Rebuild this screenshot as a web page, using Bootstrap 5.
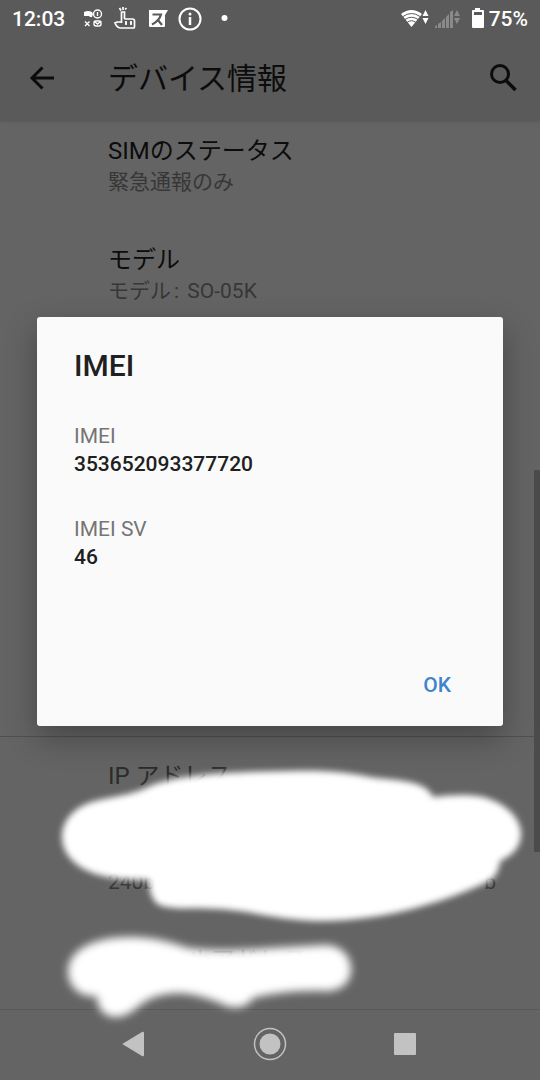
<!DOCTYPE html>
<html lang="ja">
<head>
<meta charset="utf-8">
<meta name="viewport" content="width=device-width, initial-scale=1">
<title>デバイス情報</title>
<link href="https://cdn.jsdelivr.net/npm/bootstrap@5.3.0/dist/css/bootstrap.min.css" rel="stylesheet">
<style>
  body { background: #646464; color: #0c0c0c; font-family: Roboto, "Noto Sans CJK JP", sans-serif; font-size: 21px; line-height: 25px; }
  svg { display: block; }
  .top-area { background: #5a5a5a; box-shadow: 0 1px 3px #5a5a5a; }
  .status-bar { height: 38px; padding: 0 12px; color: #fff; font-weight: 500; }
  .app-bar { height: 83px; padding: 0 20px 2px 28px; }
  .app-title { font-size: 30px; line-height: 40px; font-weight: 400; margin-left: 52px; }
  .info-list { padding: 13px 44px 0 108px; min-height: 615px; }
  .info-row { padding-bottom: 47px; }
  .info-row dt { font-size: 24px; line-height: 35px; font-weight: 400; }
  .info-row dd { margin: 0; color: #373737; line-height: 27px; }
  .colon { padding: 0 3px; }
  .address-list { padding: 22px 44px 0 108px; min-height: 0; border-top: 1px solid #505050; }
  .address-list dt { color: #2b2b2b; }
  .address-list dd { min-height: 24px; }
  .ip-value { height: 102px; }
  .scroll-thumb { right: 0; top: 349px; width: 6px; height: 382px; background: #4b4b4b; }
  .dialog-layer { inset: 38px 0 75px; padding: 0 37px; z-index: 10; }
  .dialog-box { background: #fafafa; color: #202020; border-radius: 3px; padding: 30px 36px 23px 37px; min-height: 409px; box-shadow: 0 12px 32px rgba(0,0,0,.3); }
  .dialog-box h2 { font-size: 30px; line-height: 38px; font-weight: 500; margin: 0 0 36px; }
  .dialog-box dl { margin: 0; }
  .dialog-box dt { font-weight: 400; color: #757575; line-height: 30px; }
  .dialog-box dd { font-weight: 500; line-height: 27px; margin: 0 0 36px; }
  .ok-button { color: #3e85cc; font-size: 21px; font-weight: 500; line-height: 36px; padding: 0 16px; }
  .nav-keys { height: 71px; border-top: 1px solid #595959; padding: 0 68px 2px; color: #c2c2c2; }
</style>
</head>
<body>
<div class="position-relative d-flex flex-column min-vh-100 overflow-hidden">
  <header class="top-area">
    <div class="status-bar d-flex align-items-center">
      <span>12:03</span>
      <svg class="ms-3" width="24" height="24" viewBox="0 0 24 24" fill="none" stroke="#fff" stroke-width="1.4" aria-hidden="true">
        <path d="M3 5q4-2 8 0l1 2-1 3H9L8 9H3z" fill="#fff" stroke="none"/><circle cx="16.500" cy="7" r="4"/><path d="M16.500 5v4M4 14.500l4.500 4.500M8.500 14.500L4 19"/><rect x="13" y="14" width="7" height="5" rx="2"/><path d="M13 14l3.500 3 3.500-3"/>
      </svg>
      <svg class="ms-2" width="24" height="24" viewBox="0 0 24 24" fill="none" stroke="#fff" stroke-width="1.700" aria-hidden="true">
        <path d="M8.500 16V5h3v7M6.500 1l1.500 2.500M10 0v3M13.500 1L12 2.500M11.500 12h8q2 0 2 2v6q0 1-1 1H8q-4 0-6-5l2-1h4.500"/><path d="M13 14v4M12 16h2M18 14v4M17 16h2"/>
      </svg>
      <svg class="ms-2" width="24" height="24" viewBox="0 0 24 24" aria-hidden="true">
        <path d="M4 3h19l-3 5v11q0 1-1 1H5q-1 0-1-1z" fill="#fff"/><path d="M7.500 7.500H16q-1.500 6-9 10M12.500 12.500l4.500 5.500" fill="none" stroke="#5a5a5a" stroke-width="2.200"/>
      </svg>
      <svg width="36" height="24" viewBox="0 0 36 24" fill="none" stroke="#fff" stroke-width="2" aria-hidden="true">
        <circle cx="21" cy="12" r="10.500"/><path d="M21 10v8" stroke-width="2.500"/><circle cx="21" cy="7" r="1.500" fill="#fff" stroke="none"/>
      </svg>
      <svg class="ms-3" width="12" height="12" viewBox="0 0 12 12" aria-hidden="true"><circle cx="3.500" cy="5" r="3" fill="#fff"/></svg>
      <svg class="ms-auto" width="30" height="24" viewBox="0 0 30 24" aria-hidden="true">
        <path d="M0 7Q10.500-1 21 7L10.500 20z" fill="#fff"/><path d="M2 9.500Q10.500 3.500 19 9.500M4 12.500Q10.500 8 17 12.500M6 15.500Q10.500 12 15 15.500" fill="none" stroke="#5a5a5a"/>
        <path d="M21.500 9l3-6 3 6zM21.500 11l3 6 3-6z" fill="#fff"/>
      </svg>
      <svg class="ms-1" width="28" height="24" viewBox="0 0 28 24" fill="#8a8a8a" aria-hidden="true">
        <path d="M-1 20l3-2v3h-3zM3 17l3-2v6H3zM7 14l3-3v10H7zM11 10l3-3v14h-3zM15 5l3-2v18h-3zM19 9l3-6 3 6zM19 11l3 6 3-6z"/>
      </svg>
      <svg class="ms-2" width="14" height="24" viewBox="0 0 14 24" aria-hidden="true">
        <path d="M4 1h5v2h3q1 0 1 1v16q0 1-1 1H2q-1 0-1-1V4q0-1 1-1h2z" fill="#fff"/><path d="M3 5h8v3H3z" fill="#5a5a5a"/>
      </svg>
      <span class="ms-1">75%</span>
    </div>
    <div class="app-bar d-flex align-items-center">
      <button class="btn p-0 border-0" type="button" aria-label="戻る">
        <svg width="28" height="28" viewBox="0 0 28 28" fill="none" stroke="#0c0c0c" stroke-width="3"><path d="M26 13H4M14.500 2.500L4 13l10.500 10.500"/></svg>
      </button>
      <h1 class="app-title mb-0">デバイス情報</h1>
      <button class="btn p-0 border-0 ms-auto" type="button" aria-label="検索">
        <svg width="32" height="32" viewBox="0 0 32 32" fill="none" stroke="#0c0c0c"><circle cx="12" cy="11" r="8.500" stroke-width="3"/><path d="M18 17.500l9.500 9.500" stroke-width="3.500"/></svg>
      </button>
    </div>
  </header>

  <main class="position-relative flex-grow-1 z-1">
    <dl class="info-list mb-0">
      <div class="info-row"><dt>SIMのステータス</dt><dd>緊急通報のみ</dd></div>
      <div class="info-row"><dt>モデル</dt><dd>モデル<span class="colon">:</span> SO-05K</dd></div>
    </dl>
    <div class="position-relative">
      <dl class="info-list address-list mb-0">
        <div class="info-row"><dt>IP アドレス</dt><dd class="ip-value d-flex align-items-end justify-content-between"><span>240b</span><span>b</span></dd></div>
        <div class="info-row pb-0"><dt>Bluetoothアドレス</dt><dd></dd></div>
      </dl>
      <!-- brush strokes that cover the private addresses -->
      <svg class="position-absolute top-0 start-0 w-100" viewBox="0 737 540 300" fill="#fff" aria-hidden="true">
        <defs>
          <filter id="soft" x="-5%" y="-10%" width="110%" height="120%"><feGaussianBlur stdDeviation="3"/></filter>
          <filter id="softer" x="-5%" y="-15%" width="110%" height="130%"><feGaussianBlur stdDeviation="4"/></filter>
        </defs>
        <path filter="url(#soft)" d="M62 838C62 820 76 807 95 802C120 796 132 796 150 787C180 775 235 773 290 772C330 771 350 774 370 778C395 782 425 780 433 798C455 796 475 794 492 801C510 808 521 822 521 835C521 850 509 858 500 862C499 872 495 880 485 884C450 900 390 922 320 922C280 921 260 914 230 911C200 907 160 914 154 901Q149 894 149 881C120 881 97 878 82 869C69 861 62 850 62 838Z"/>
        <path filter="url(#softer)" d="M68 973C68 949 97 938 130 938C155 938 170 943 188 949C225 954 265 949 290 948L325 946C341 946 351 957 351 970C351 984 341 992 325 992C295 991 270 995 253 999C246 1011 230 1010 220 1004C190 993 175 992 155 998C140 1002 132 1018 116 1018C104 1018 97 1010 97 997C81 999 68 988 68 973Z"/>
      </svg>
    </div>
    <div class="scroll-thumb position-absolute"></div>
  </main>

  <nav class="nav-keys d-flex align-items-center justify-content-between" aria-label="ナビゲーション">
    <button class="btn p-0 border-0 flex-fill d-flex justify-content-center" type="button" aria-label="戻る">
      <svg width="36" height="36" viewBox="0 0 36 36" fill="#c2c2c2"><path d="M6 17.500L25 6q2-1 2 1v22q0 2-2 1L6 18.500q-1-.5 0-1z"/></svg>
    </button>
    <button class="btn p-0 border-0 flex-fill d-flex justify-content-center" type="button" aria-label="ホーム">
      <svg width="36" height="36" viewBox="0 0 36 36"><circle cx="18" cy="18" r="15.500" fill="none" stroke="#c2c2c2" stroke-width="1.500"/><circle cx="18" cy="18" r="10.500" fill="#c2c2c2"/></svg>
    </button>
    <button class="btn p-0 border-0 flex-fill d-flex justify-content-center" type="button" aria-label="履歴">
      <svg width="36" height="36" viewBox="0 0 36 36"><rect x="7" y="7" width="22" height="22" rx="1" fill="#c2c2c2"/></svg>
    </button>
  </nav>

  <div class="dialog-layer position-absolute d-flex align-items-center">
    <section class="dialog-box w-100 d-flex flex-column" role="dialog" aria-labelledby="imei-title">
      <h2 id="imei-title">IMEI</h2>
      <dl>
        <dt>IMEI</dt><dd>353652093377720</dd>
        <dt>IMEI SV</dt><dd>46</dd>
      </dl>
      <button class="ok-button btn border-0 align-self-end mt-auto" type="button">OK</button>
    </section>
  </div>
</div>
<script src="https://cdn.jsdelivr.net/npm/bootstrap@5.3.0/dist/js/bootstrap.bundle.min.js"></script>
</body>
</html>
